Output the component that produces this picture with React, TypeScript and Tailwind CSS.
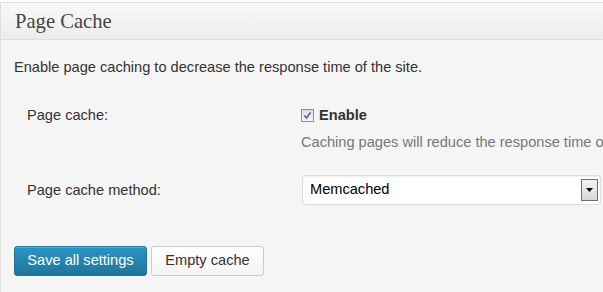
export default function App() {
  return (
    <div className="w-[603px] h-[292px] overflow-hidden bg-white pt-[2px]" style={{ fontFamily: '"Liberation Sans", Arial, sans-serif' }}>
      <div className="h-[290px] border-t border-l border-[#dedede] bg-[#f5f5f5]">
        <div className="h-[37px] bg-gradient-to-b from-[#f9f9f9] to-[#ececec] border-b border-[#dfdfdf] pl-[14px] flex items-center">
          <h2 className="text-[20.6px] leading-none text-[#464646] pt-[1px]" style={{ fontFamily: '"Liberation Serif", "Times New Roman", serif' }}>Page Cache</h2>
        </div>
        <p className="text-[14.6px] text-[#333] pl-[13px] pt-[18px] leading-[18px] whitespace-nowrap">Enable page caching to decrease the response time of the site.</p>
        <div className="flex mt-[30px]">
          <div className="w-[300px] shrink-0 pl-[26px] text-[14.6px] text-[#333] leading-[18px]">Page cache:</div>
          <div className="whitespace-nowrap">
            <label className="flex items-center gap-[5px] text-[14.6px] font-bold text-[#333] leading-[18px]">
              <span className="w-[13px] h-[13px] border border-[#8f8f8f] bg-gradient-to-b from-[#dcdcdc] to-[#f5f5f5] flex items-center justify-center">
                <svg width="9" height="9" viewBox="0 0 9 9"><path d="M1.5 4.5 L3.5 7 L7.5 1.5" stroke="#4a5fa8" strokeWidth="1.6" fill="none" /></svg>
              </span>
              Enable
            </label>
            <div className="text-[14.6px] text-[#777] leading-[18px] mt-[9px]">Caching pages will reduce the response time of your site and increase the scale of your web server.</div>
          </div>
        </div>
        <div className="flex mt-[24px] items-center">
          <div className="w-[301px] shrink-0 pl-[26px] text-[14.6px] text-[#333] leading-[18px]">Page cache method:</div>
          <div className="w-[299px] shrink-0 h-[30px] bg-white border border-[#dddddd] rounded-[3px] flex items-center justify-between pl-[7px] pr-[2px] shadow-[inset_0_1px_2px_rgba(0,0,0,0.07)]">
            <span className="text-[14.6px] text-black">Memcached</span>
            <span className="w-[17px] h-[22px] border border-[#6f6f6f] bg-gradient-to-b from-[#f4f4f4] to-[#d8d8d8] flex items-center justify-center">
              <svg width="7" height="4" viewBox="0 0 7 4"><path d="M0 0 H7 L3.5 4 Z" fill="#000" /></svg>
            </span>
          </div>
        </div>
        <div className="flex gap-[4px] pl-[13px] mt-[41px]">
          <button className="w-[133px] h-[30px] rounded-[3px] border border-[#21759b] bg-gradient-to-b from-[#2a95c5] to-[#21759b] text-white text-[14.6px] shadow-[inset_0_1px_0_rgba(120,200,230,0.5)]">Save all settings</button>
          <button className="w-[113px] h-[30px] rounded-[3px] border border-[#cccccc] bg-gradient-to-b from-[#fefefe] to-[#f4f4f4] text-[#333] text-[14.6px]">Empty cache</button>
        </div>
      </div>
    </div>
  );
}
